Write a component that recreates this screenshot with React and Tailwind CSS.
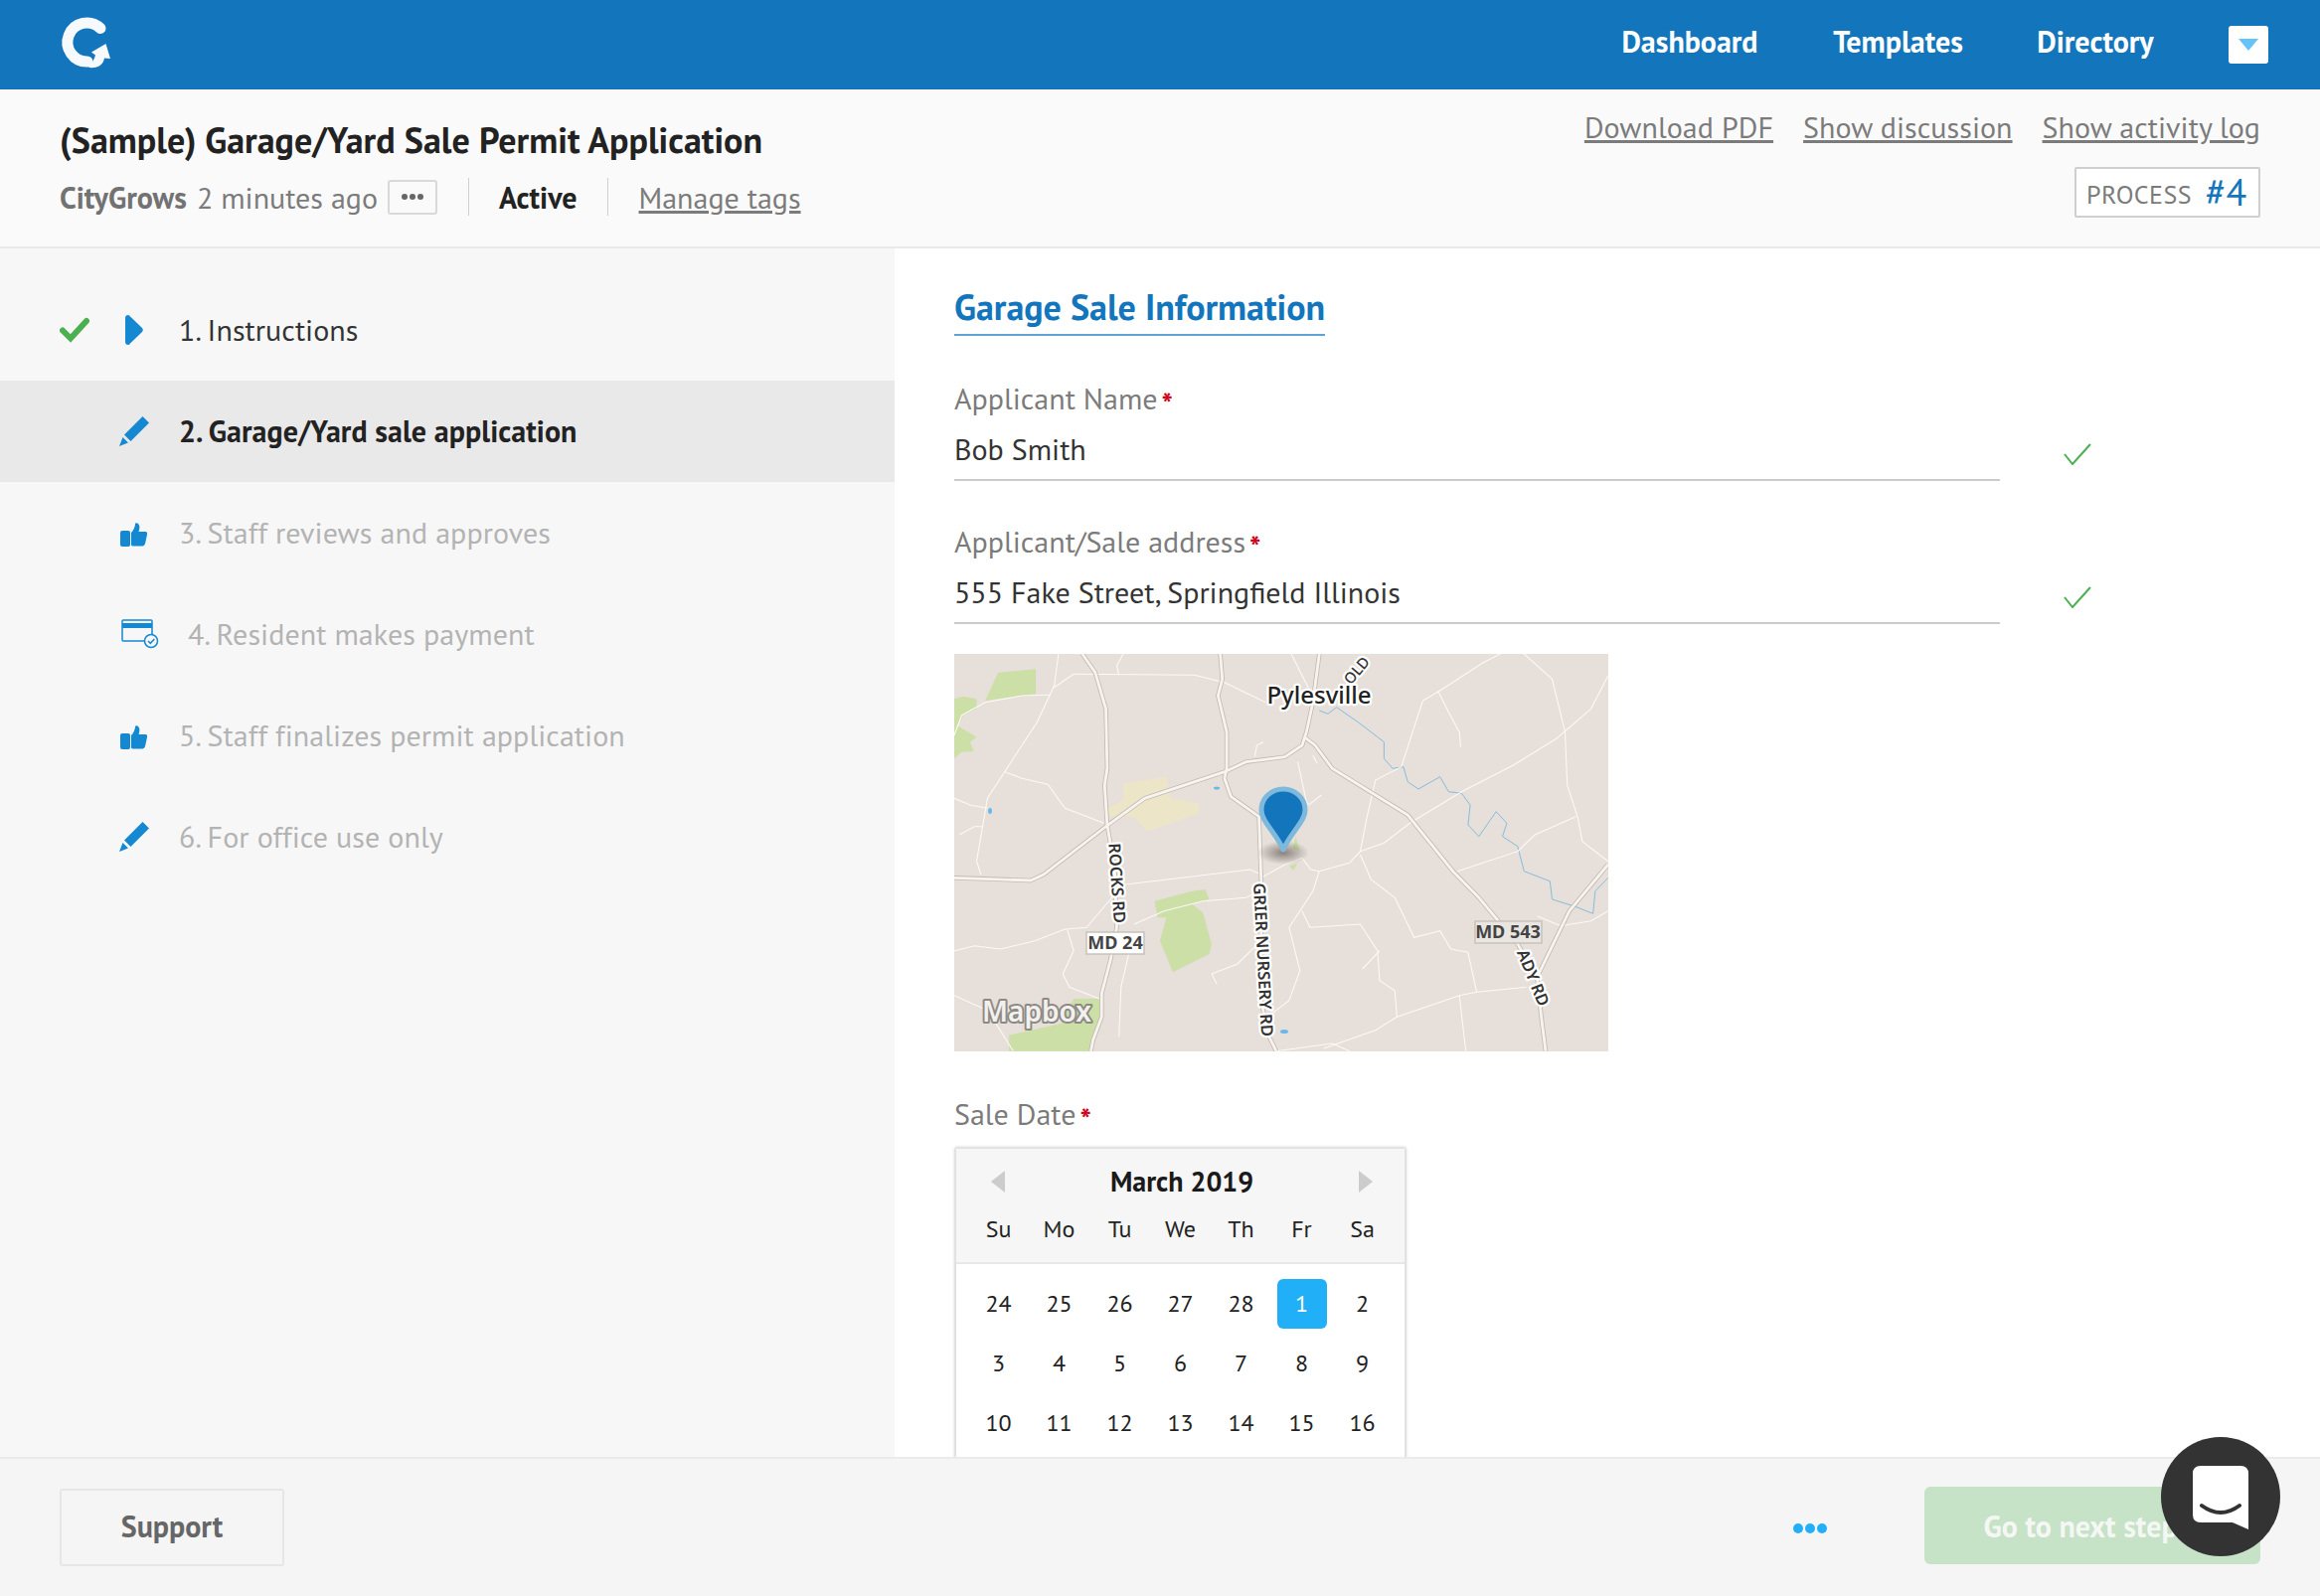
import React from "react";

const P = (x, y) => [((x - 23) / 2.306).toFixed(1), ((y - 54) / 3).toFixed(1)];
const line = (pts) => pts.map(([x, y]) => P(x, y).join(",")).join(" ");

const majors = [
  [[320,54],[350,110],[375,220],[378,400],[372,450],[378,570],[395,700],[400,880],[385,980],[365,1080],[365,1150],[345,1220],[340,1253]],
  [[640,54],[645,130],[635,180],[655,290],[655,400],[650,430],[665,485],[730,545],[735,740],[735,1100],[750,1200],[770,1253]],
  [[23,730],[200,738],[230,720],[380,570],[465,490],[650,410],[700,380],[790,365],[830,330],[840,290],[855,200],[870,54]],
  [[835,305],[860,330],[900,400],[1075,540],[1180,710],[1240,790],[1330,930],[1375,1030],[1385,1150],[1395,1253]],
  [[1540,690],[1450,830],[1375,1030]],
];
const minors = [
  [[265,54],[255,150],[215,260],[140,410],[100,490],[75,680],[85,720]],
  [[300,115],[255,155]],
  [[300,115],[580,118],[650,140],[745,200]],
  [[95,200],[180,180],[245,178]],
  [[23,300],[40,240],[95,200]],
  [[23,490],[60,510],[100,520]],
  [[140,410],[180,430],[240,448],[280,520],[370,565]],
  [[35,600],[70,575],[90,575]],
  [[415,54],[400,90],[405,118]],
  [[805,54],[850,170]],
  [[420,750],[710,705],[735,720]],
  [[735,730],[790,690],[830,670],[850,705],[870,710],[940,685],[965,650],[980,550],[1000,435],[1060,395],[1110,195],[1150,165],[1250,80],[1290,54]],
  [[870,710],[855,770],[800,880],[825,1010],[800,1100],[740,1160]],
  [[830,830],[848,880],[965,870],[1005,950],[1010,1040],[1045,1070],[1050,1150],[1195,1085],[1235,1075],[1350,1060]],
  [[1195,1085],[1205,1200],[1210,1253]],
  [[1235,1075],[1215,955],[1175,945],[1150,890],[1090,910],[1045,790],[990,735],[965,660]],
  [[965,650],[1020,625],[1080,565],[1200,470],[1320,390],[1420,310],[1500,220],[1540,120]],
  [[1145,165],[1170,230],[1195,290],[1198,335]],
  [[1345,54],[1410,130],[1440,290],[1445,450],[1470,550],[1480,620],[1540,680]],
  [[1465,545],[1370,600],[1330,650],[1190,710]],
  [[23,950],[70,935],[130,945],[210,920],[280,885],[330,880],[395,780]],
  [[285,885],[300,950],[275,1020],[290,1060],[370,1100]],
  [[440,870],[510,830],[600,800],[700,790],[730,770]],
  [[435,920],[410,1060],[405,1210]],
  [[620,1020],[680,990],[735,920]],
  [[620,1020],[632,1050]],
  [[23,1085],[100,1130],[160,1253]],
  [[770,1253],[900,1230],[940,1253]],
  [[1010,950],[970,1005]],
  [[720,365],[725,330],[740,320]],
  [[855,360],[865,385]],
  [[820,380],[840,500],[845,510],[875,480]],
  [[1050,1150],[1000,1190],[880,1245]],
  [[1375,845],[1430,875],[1500,860],[1540,830]],
];
const greens = [
  [[95,195],[125,110],[212,100],[212,175],[150,185]],
  [[23,190],[45,182],[75,190],[75,220],[45,240],[30,270],[75,305],[60,320],[68,348],[40,350],[23,370]],
  [[488,800],[575,770],[605,765],[615,795],[575,810],[600,835],[620,930],[615,960],[530,1015],[500,920],[515,850],[495,850]],
  [[150,1205],[270,1170],[300,1095],[360,1095],[365,1150],[335,1253],[150,1253]],
  [[808,640],[815,605],[825,650]],
  [[800,695],[820,685],[810,708]],
];
const yellow = [[380,520],[415,495],[415,445],[515,425],[525,490],[590,505],[590,535],[470,590],[440,545],[385,545]];
const water = [[870,225],[890,235],[910,215],[960,260],[1020,320],[1020,370],[1040,400],[1065,395],[1075,440],[1100,462],[1150,425],[1170,470],[1200,475],[1220,510],[1215,570],[1240,605],[1280,530],[1305,565],[1295,605],[1330,635],[1345,710],[1405,740],[1410,795],[1460,815],[1505,838],[1510,770],[1540,730]];

function MapPicture() {
  const halo = { paintOrder: "stroke", stroke: "#fff", strokeWidth: 4.5, strokeLinejoin: "round" };
  return (
    <svg width="658" height="400" viewBox="0 0 658 400" className="block font-['Noto_Sans',sans-serif]">
      <defs>
        <radialGradient id="pinshadow">
          <stop offset="0%" stopColor="#6a635c" stopOpacity="0.75" />
          <stop offset="100%" stopColor="#6a635c" stopOpacity="0" />
        </radialGradient>
      </defs>
      <rect width="658" height="400" fill="#e7dfd9" />
      {greens.map((g, i) => <polygon key={i} points={line(g)} fill="#cbdfa6" />)}
      <polygon points={line(yellow)} fill="#ece5c8" />
      <polyline points={line(water)} fill="none" stroke="#7ab8de" strokeWidth="0.9" />
      <ellipse cx="36" cy="158" rx="2" ry="3" fill="#6bb8ea" />
      <ellipse cx="264" cy="135" rx="3" ry="1.5" fill="#6bb8ea" />
      <ellipse cx="332" cy="380" rx="4" ry="2" fill="#6bb8ea" />
      {minors.map((m, i) => <polyline key={i} points={line(m)} fill="none" stroke="#fbf9f6" strokeWidth="1.1" />)}
      {majors.map((m, i) => <polyline key={i} points={line(m)} fill="none" stroke="#c2bab2" strokeWidth="4.5" />)}
      {majors.map((m, i) => <polyline key={i} points={line(m)} fill="none" stroke="#f7f4f0" strokeWidth="2.8" />)}
      <text transform="translate(409,20) rotate(-50)" textAnchor="middle" fontSize="15" fontWeight="500" fill="#333" style={halo}>OLD</text>
      <text x="367" y="50" textAnchor="middle" fontSize="24" fontWeight="500" fill="#222" style={halo}>Pylesville</text>
      <text transform="translate(158,231) rotate(86)" textAnchor="middle" fontSize="16.5" fontWeight="600" fill="#333" style={halo}>ROCKS RD</text>
      <text transform="translate(305,308) rotate(87)" textAnchor="middle" fontSize="16.5" fontWeight="600" fill="#333" style={halo}>GRIER NURSERY RD</text>
      <text transform="translate(577,328) rotate(68)" textAnchor="middle" fontSize="16.5" fontWeight="600" fill="#333" style={halo}>ADY RD</text>
      <rect x="133" y="280" width="58" height="22" fill="#fff" stroke="#c8c2bc" strokeWidth="1.5" />
      <text x="162" y="297" textAnchor="middle" fontSize="18" fontWeight="700" fill="#444">MD 24</text>
      <rect x="524" y="269" width="67" height="22" fill="#e9e5e1" stroke="#c8c2bc" strokeWidth="1.5" />
      <text x="557" y="286" textAnchor="middle" fontSize="18" fontWeight="700" fill="#444">MD 543</text>
      <text x="83" y="370" textAnchor="middle" fontSize="28" fontWeight="600" fill="#f3f1ee" style={{ paintOrder: "stroke", stroke: "#8d8a86", strokeWidth: 4, strokeLinejoin: "round" }}>Mapbox</text>
      <ellipse cx="331" cy="200" rx="26" ry="12" fill="url(#pinshadow)" />
      <path d="M331 197 C 324 180 309 169 309 157 C 309 145 319 136 331 136 C 343 136 353 145 353 157 C 353 169 338 180 331 197 Z" fill="#1376bd" stroke="#7db9dc" strokeWidth="5" strokeLinejoin="round" />
    </svg>
  );
}

function Logo() {
  return (
    <svg width="70" height="70" viewBox="0 0 70 70" className="shrink-0">
      <path d="M52 19.5 A19.5 19.5 0 1 0 39 53" fill="none" stroke="#f6faff" strokeWidth="11" strokeLinecap="round" />
      <path d="M57.5 35 L43 43.5 L47 46.5 C46 50 44 54 40 59 C50 60 55 56 56 49.5 L62 50 Z" fill="#f6faff" />
    </svg>
  );
}
const Check = () => (
  <svg width="30" height="27" viewBox="0 0 30 27"><path d="M3 13.5 L11 21.5 L27 4" fill="none" stroke="#4caf50" strokeWidth="6" strokeLinejoin="miter" strokeLinecap="round" /></svg>
);
const Chevron = () => (
  <svg width="18" height="30" viewBox="0 0 18 30" className="ml-[6px]"><path d="M0 3 Q0 0 3 0 Q4 0 5 1.5 L17 13 Q18.500 15 17 17 L5 28.500 Q4 30 3 30 Q0 30 0 27 Z" fill="#1588d2" /></svg>
);
const Pencil = () => (
  <svg width="30" height="30" viewBox="0 0 30 30" fill="#1588d2"><path d="M23.500 0 L30 6.500 L11.500 25 L5 18.500 Z" /><path d="M3.500 21 L9 26.500 L0 30 Z" /></svg>
);
const Thumb = () => (
  <svg width="27" height="24" viewBox="0 0 27 24" fill="#1588d2" className="ml-[1px] mt-[3px]"><rect x="0" y="8" width="10" height="16" rx="2" /><path d="M11 22 V10 C13 8 15 4 15 1.500 C15 0 17 0 18 1 C20 3 19.500 6 18.500 9 H25 C27 9 27.500 10.500 27 12 L25 21 C24.500 23 23 23.500 21 23.500 H14 C12 23.500 11 23 11 22 Z" /></svg>
);
const Card = () => (
  <svg width="38" height="30" viewBox="0 0 38 30" className="ml-[2px]">
    <rect x="1" y="1" width="30" height="21" rx="1" fill="none" stroke="#1588d2" strokeWidth="1.500" />
    <rect x="1" y="4" width="30" height="5" fill="#1588d2" />
    <circle cx="30" cy="22" r="6.500" fill="#f7f7f7" stroke="#1588d2" strokeWidth="1.500" />
    <path d="M27 22 L29.300 24.300 L33.300 20" fill="none" stroke="#1588d2" strokeWidth="1.500" />
  </svg>
);
const Tick = () => (
  <svg width="28" height="22" viewBox="0 0 28 22" className="shrink-0"><path d="M1 11 L9 21 L27 1" fill="none" stroke="#4caf50" strokeWidth="2" /></svg>
);
const Star = () => <span className="relative top-[7px] ml-[4px] text-[30px] font-bold leading-none text-[#d0021b]">*</span>;

function Step({ check, icon, text, active, done, extra }) {
  return (
    <div className={`flex h-[102px] items-center ${active ? "bg-[#e9e9e9]" : ""}`}>
      <div className="ml-[60px] flex w-[60px] items-center">{check && <Check />}</div>
      <div className="flex w-[60px] items-center justify-start">{icon}</div>
      <span className={`${extra || ""} text-[30px] leading-none tracking-[0.06px] ${active ? "font-bold text-[#222]" : done ? "text-[#333]" : "text-[#b3b3b3]"}`}>{text}</span>
    </div>
  );
}

function Field({ label, value }) {
  return (
    <div className="mb-[40px]">
      <div className="flex h-[40px] items-center text-[30px] text-[#7b7b7b]">{label}<Star /></div>
      <div className="relative mt-[8px] h-[56px] w-[1052px] border-b-2 border-[#cbcbcb] text-[30px] leading-[48px] text-[#333]">
        {value}
        <div className="absolute left-[1116px] top-[18px]"><Tick /></div>
      </div>
    </div>
  );
}

const weeks = [[24,25,26,27,28,1,2],[3,4,5,6,7,8,9],[10,11,12,13,14,15,16]];

export default function App() {
  return (
    <div className="relative flex h-[1606px] w-[2334px] flex-col overflow-hidden bg-white font-['PT_Sans',Lato,sans-serif]">
      <header className="flex h-[90px] shrink-0 items-center bg-[#1376bd] pl-[49px]">
        <div className="-mt-[2px]"><Logo /></div>
        <nav className="ml-auto flex items-center text-[30px] font-bold text-white">
          <span className="-mt-[7px] w-[138px] text-center">Dashboard</span>
          <span className="-mt-[7px] ml-[75px] w-[131px] text-center">Templates</span>
          <span className="-mt-[7px] ml-[74px] w-[118px] text-center">Directory</span>
          <span className="ml-[75px] mr-[52px] flex h-[38px] w-[40px] items-center justify-center rounded-[3px] bg-white">
            <svg width="20" height="12" viewBox="0 0 20 12"><path d="M0 0 H20 L10 12 Z" fill="#64c4fa" /></svg>
          </span>
        </nav>
      </header>

      <section className="flex h-[160px] shrink-0 justify-between border-b-2 border-[#e9e9e9] bg-[#fafafa] px-[60px]">
        <div>
          <h1 className="mt-[29px] text-[36px] font-bold leading-[44px] tracking-[0.03px] text-[#222]">(Sample) Garage/Yard Sale Permit Application</h1>
          <div className="mt-[16px] flex h-[38px] items-center text-[30px] text-[#7b7b7b]">
            <span className="font-bold text-[#727272]">CityGrows</span>
            <span className="ml-[10px]">2 minutes ago</span>
            <span className="ml-[10px] flex h-[35px] w-[50px] items-center justify-center rounded-[3px] border-2 border-[#d9d9d9]">
              <svg width="24" height="8" viewBox="0 0 24 8" fill="#666"><circle cx="4" cy="4" r="3" /><circle cx="12" cy="4" r="3" /><circle cx="20" cy="4" r="3" /></svg>
            </span>
            <span className="ml-[31px] h-[38px] w-px bg-[#cfcfcf]" />
            <span className="ml-[30px] font-bold text-[#222]">Active</span>
            <span className="ml-[31px] h-[38px] w-px bg-[#cfcfcf]" />
            <span className="ml-[30px] underline">Manage tags</span>
          </div>
        </div>
        <div className="flex flex-col items-end">
          <div className="mt-[18px] flex gap-[30px] text-[30px] leading-[40px] tracking-[0.05px] text-[#7b7b7b] underline">
            <span>Download PDF</span>
            <span>Show discussion</span>
            <span>Show activity log</span>
          </div>
          <div className="mt-[20px] flex h-[51px] w-[187px] items-center rounded-[2px] border-2 border-[#cfcfcf] bg-white pl-[10px]">
            <span className="mt-[4px] text-[26px] tracking-[0.4px] text-[#7b7b7b]">PROCESS</span>
            <span className="-mt-[2px] ml-[14px] text-[38px] leading-none text-[#1376bd]">#4</span>
          </div>
        </div>
      </section>

      <main className="flex min-h-0 flex-1 overflow-hidden">
        <aside className="w-[900px] shrink-0 bg-[#f7f7f7] pt-[31px]">
          <Step check icon={<Chevron />} text="1. Instructions" done />
          <Step icon={<Pencil />} text="2. Garage/Yard sale application" active />
          <Step icon={<Thumb />} text="3. Staff reviews and approves" />
          <Step icon={<Card />} text="4. Resident makes payment" extra="ml-[9px]" />
          <Step icon={<Thumb />} text="5. Staff finalizes permit application" />
          <Step icon={<Pencil />} text="6. For office use only" />
        </aside>
        <div className="flex-1 pl-[60px] pt-[37px]">
          <h2 className="inline-block border-b-2 border-[#5da3d6] pb-[5px] text-[36px] font-bold leading-[44px] text-[#1376bd]">Garage Sale Information</h2>
          <div className="mt-[42px]">
            <Field label="Applicant Name" value="Bob Smith" />
            <Field label="Applicant/Sale address" value="555 Fake Street, Springfield Illinois" />
          </div>
          <div className="-mt-[10px]"><MapPicture /></div>
          <div className="mt-[42px] flex h-[40px] items-center text-[30px] text-[#7b7b7b]">Sale Date<Star /></div>
          <div className="mt-[14px] w-[455px] rounded-[3px] border-2 border-[#e2e2e2] shadow-[0_0_3px_rgba(0,0,0,0.15)]">
            <div className="border-b-2 border-[#e8e8e8] bg-[#f6f6f6] px-[12px]">
              <div className="flex h-[64px] items-center justify-between pl-[23px] pr-[20px] pt-[2px]">
                <svg width="14" height="22" viewBox="0 0 14 22"><path d="M14 0 V22 L0 11 Z" fill="#cccccc" /></svg>
                <span className="text-[28px] font-bold text-[#1a1a1a]">March 2019</span>
                <svg width="14" height="22" viewBox="0 0 14 22"><path d="M0 0 V22 L14 11 Z" fill="#cccccc" /></svg>
              </div>
              <div className="grid h-[50px] grid-cols-7 text-center text-[24px] leading-[34px] text-[#222]">
                {["Su","Mo","Tu","We","Th","Fr","Sa"].map((d) => <span key={d}>{d}</span>)}
              </div>
            </div>
            <div className="bg-white px-[12px] pb-[40px] pt-[10px]">
              {weeks.map((w, i) => (
                <div key={i} className="grid h-[60px] grid-cols-7 text-[24px] text-[#222]">
                  {w.map((d) => (
                    <div key={d} className="flex items-center justify-center">
                      <span className={`flex h-[50px] w-[50px] items-center justify-center rounded-[6px] ${d === 1 ? "bg-[#21b0f8] text-white" : ""}`}>{d}</span>
                    </div>
                  ))}
                </div>
              ))}
            </div>
          </div>
        </div>
      </main>

      <footer className="flex h-[140px] shrink-0 items-center border-t-2 border-[#ebebeb] bg-[#f5f5f5] px-[60px]">
        <button className="h-[78px] w-[226px] rounded-[3px] border-2 border-[#e6e6e6] pb-[3px] text-[30px] font-bold text-[#666]">Support</button>
        <svg width="36" height="12" viewBox="0 0 36 12" fill="#21b0f8" className="ml-auto mt-[2px]"><circle cx="6" cy="6" r="5" /><circle cx="18" cy="6" r="5" /><circle cx="30" cy="6" r="5" /></svg>
        <button className="-mt-[4px] ml-[97px] h-[78px] w-[338px] rounded-[6px] bg-[#c6e2c7] pr-[24px] text-[30px] font-bold text-[#f4f7f3]">Go to next step</button>
      </footer>

      <div className="absolute bottom-[40px] right-[40px] flex h-[120px] w-[120px] items-center justify-center rounded-full bg-[#333]">
        <svg width="56" height="64" viewBox="0 0 56 64" className="mt-[2px]">
          <path d="M8 0 H48 Q56 0 56 8 V64 L40 57 H8 Q0 57 0 49 V8 Q0 0 8 0 Z" fill="#fff" />
          <path d="M9 40 Q28 54 47 40" fill="none" stroke="#333" strokeWidth="4" strokeLinecap="round" />
        </svg>
      </div>
    </div>
  );
}
